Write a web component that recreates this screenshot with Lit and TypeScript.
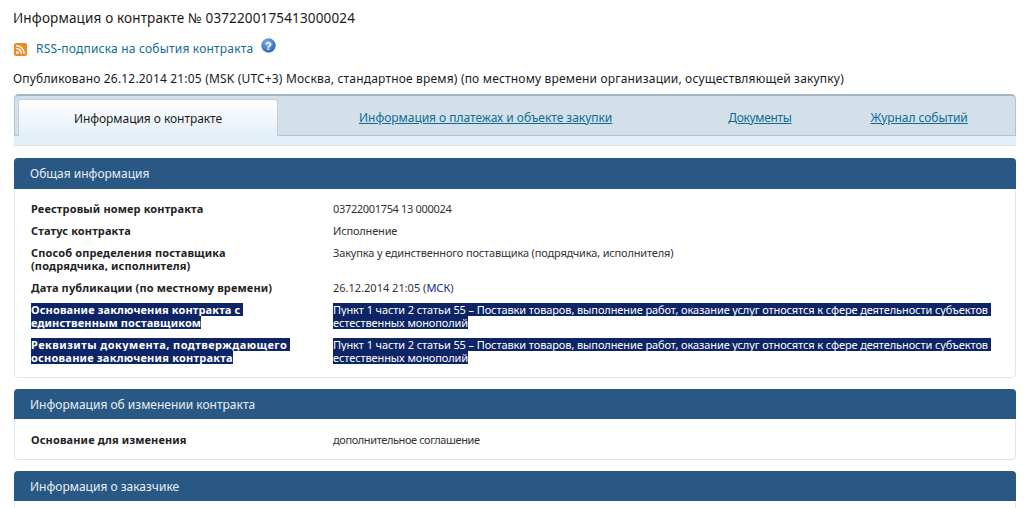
import { LitElement, html, css } from "lit";
import { customElement } from "lit/decorators.js";

const punkt = ["Пункт 1 части 2 статьи 55 – Поставки товаров, выполнение работ, оказание услуг относятся к сфере деятельности субъектов\u00a0", "естественных монополий"];
const rows1 = [
  { l: ["Реестровый номер контракта"], v: html`<span class="num">03722001754 13 000024</span>` },
  { l: ["Статус контракта"], v: html`Исполнение` },
  { l: ["Способ определения поставщика", "(подрядчика, исполнителя)"], v: html`Закупка у единственного поставщика (подрядчика, исполнителя)` },
  { l: ["Дата публикации (по местному времени)"], v: html`<span class="date">26.12.2014 21:05 (<span class="msk">МСК</span>)</span>` },
  { l: ["Основание заключения контракта с\u00a0", "единственным поставщиком"], sel: true, lines: punkt },
  { l: ["Реквизиты документа, подтверждающего\u00a0", "основание заключения контракта"], sel: true, wide: true, lines: punkt },
];

@customElement("app-root")
export class AppRoot extends LitElement {
  static styles = css`
    :host { display: block; height: 508px; overflow: hidden; background: #fff; font-family: "Noto Sans", "Liberation Sans", sans-serif; color: #1a1a1a; }
    .page { padding: 10px 9px 0 14px; }
    .title { font-size: 13.5px; letter-spacing: 0.15px; line-height: 17px; margin-left: -1px; }
    .rss { display: flex; align-items: center; margin-top: 12px; height: 18px; font-size: 12px; letter-spacing: 0.2px; color: #0f6d94; }
    .rss .r { margin-right: 9px; margin-top: 2px; flex: none; }
    .rss .q { margin-left: 8px; margin-bottom: 5px; flex: none; }
    .pub { margin-top: 14px; margin-left: -1px; font-size: 12px; letter-spacing: 0.18px; line-height: 16px; white-space: nowrap; }
    .tabs { margin-top: 7px; height: 51px; box-sizing: border-box; border-radius: 5px 5px 0 0; background: #e3eff8; box-shadow: 0 1px 1px #d4dde3; display: flex; flex-direction: column; }
    .tabbar { height: 42px; box-sizing: border-box; background: #d3e0ea; border-top: 2px solid #a3b8c6; border-bottom: 1px solid #b4c3ce; border-right: 1px solid #b4c3ce; border-left: 1px solid #b4c3ce; border-radius: 5px 5px 0 0; display: flex; padding-left: 3px; }
    .tab { font-size: 12px; color: #0f6d94; text-decoration: underline; display: flex; align-items: center; justify-content: center; padding-top: 3px; }
    .tab.on { width: 260px; flex: none; margin-top: 3px; margin-bottom: -1px; padding-top: 1px; background: linear-gradient(#ffffff, #e3eff8); border: 1px solid #c2d0da; border-bottom: none; border-radius: 3px 3px 0 0; color: #1a1a1a; text-decoration: none; box-sizing: border-box; letter-spacing: -0.05px; }
    .t1 { margin-left: 81px; letter-spacing: -0.03px; }
    .t2 { margin-left: 116px; letter-spacing: -0.33px; }
    .t3 { margin-left: 79px; letter-spacing: -0.06px; }
    .section { margin-top: 11px; border: 1px solid #dde6ec; border-radius: 4px; }
    .section.first { margin-top: 13px; }
    .head { background: #2a5885; color: #e8eef4; height: 31px; display: flex; align-items: center; padding-left: 16px; font-size: 12px; margin: -1px -1px 0; border-radius: 4px 4px 0 0; }
    .head.h2 { height: 30px; }
    .body { padding: 13px 10px 13px 16px; display: flex; flex-direction: column; gap: 9px; }
    .body.one { padding: 14px 10px 13px 16px; }
    .row { display: grid; grid-template-columns: 302px 1fr; font-size: 11px; line-height: 13px; }
    .l { font-weight: 700; color: #222; font-size: 11px; letter-spacing: 0.13px; }
    .v { color: #333; font-size: 11px; letter-spacing: -0.16px; white-space: nowrap; }
    .line { display: block; }
    .sel { display: inline-block; vertical-align: top; height: 13px; background: #0d2566; color: #fff; white-space: pre; }
    .v .sel { letter-spacing: -0.1px; }
    .wide .line:first-child { letter-spacing: 0.45px; }
    .wide .line:last-child { letter-spacing: 0.23px; }
    .msk { color: #0a2a9a; }
    .num { letter-spacing: -0.33px; }
    .date { letter-spacing: 0; }
    .dop { letter-spacing: -0.4px; }
    .tail { height: 20px; }
  `;
  render() {
    return html`<div class="page">
      <div class="title">Информация о контракте № 0372200175413000024</div>
      <div class="rss">
        <svg class="r" width="13" height="13" viewBox="0 0 13 13"><rect width="13" height="13" rx="2" fill="#ee8a24"/><circle cx="3.4" cy="9.6" r="1.4" fill="#fff"/><path d="M2.2 5.6a5.2 5.2 0 0 1 5.2 5.2M2.2 2.8a8 8 0 0 1 8 8" fill="none" stroke="#fff" stroke-width="1.5"/></svg>
        <span>RSS-подписка на события контракта</span>
        <svg class="q" width="15" height="15" viewBox="0 0 15 15"><defs><radialGradient id="g" cx=".4" cy=".3" r=".8"><stop offset="0" stop-color="#7fb2ea"/><stop offset="1" stop-color="#1f57ad"/></radialGradient></defs><circle cx="7.5" cy="7.5" r="7.2" fill="url(#g)"/><text x="7.5" y="11.5" text-anchor="middle" font-size="11" font-weight="700" fill="#fff" font-family="Liberation Sans">?</text></svg>
      </div>
      <div class="pub">Опубликовано 26.12.2014 21:05 (MSK (UTC+3) Москва, стандартное время) (по местному времени организации, осуществляющей закупку)</div>
      <div class="tabs"><div class="tabbar">
        <div class="tab on">Информация о контракте</div>
        <div class="tab t1">Информация о платежах и объекте закупки</div>
        <div class="tab t2">Документы</div>
        <div class="tab t3">Журнал событий</div>
      </div></div>
      <div class="section first">
        <div class="head">Общая информация</div>
        <div class="body">
          ${rows1.map(r => html`<div class="row">
            <div class="l ${r.wide ? "wide" : ""}">${r.l.map(t => html`<div class="line">${r.sel ? html`<span class="sel">${t}</span>` : t}</div>`)}</div>
            <div class="v">${r.lines ? r.lines.map(t => html`<div class="line"><span class="sel">${t}</span></div>`) : r.v}</div>
          </div>`)}
        </div>
      </div>
      <div class="section">
        <div class="head h2">Информация об изменении контракта</div>
        <div class="body one"><div class="row"><div class="l">Основание для изменения</div><div class="v"><span class="dop">дополнительное соглашение</span></div></div></div>
      </div>
      <div class="section">
        <div class="head h2">Информация о заказчике</div>
        <div class="tail"></div>
      </div>
    </div>`;
  }
}
